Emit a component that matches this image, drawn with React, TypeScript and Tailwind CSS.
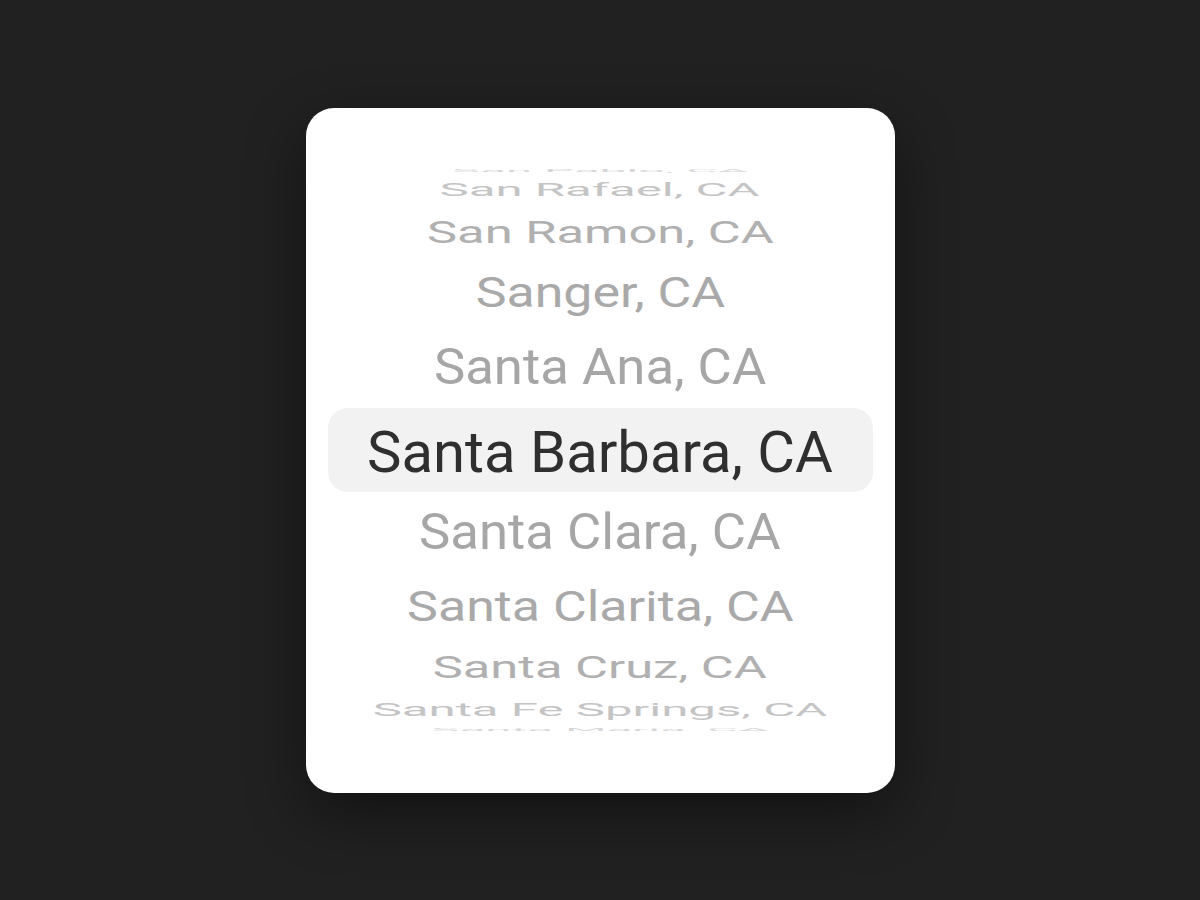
import React from "react";

const R = 280;
const A = (17 * Math.PI) / 180;
const P = 2254;

const cities = [
  "San Pablo, CA",
  "San Rafael, CA",
  "San Ramon, CA",
  "Sanger, CA",
  "Santa Ana, CA",
  "Santa Barbara, CA",
  "Santa Clara, CA",
  "Santa Clarita, CA",
  "Santa Cruz, CA",
  "Santa Fe Springs, CA",
  "Santa Maria, CA",
];

const tone = [
  "text-[#2f2f2f]",
  "text-[#a6a6a6]",
  "text-[#a9a9a9]",
  "text-[#b0b0b0]",
  "text-[#c4c4c4]",
  "text-[#d6d6d6]",
];

const clamp = (t: number) => Math.max(-Math.PI / 2, Math.min(Math.PI / 2, t));
const edge = (t: number) => R * Math.sin(clamp(t));

function Row({ label, k }: { label: string; k: number }) {
  if (k === 0) {
    return (
      <div className="mx-[22px] flex h-[84px] shrink-0 items-center justify-center rounded-[20px] bg-[#f2f2f2]">
        <span className={`translate-y-[2px] whitespace-nowrap text-[58px] leading-none ${tone[0]}`}>{label}</span>
      </div>
    );
  }
  const top = edge((k - 0.5) * A);
  const bottom = edge((k + 0.5) * A);
  const h = bottom - top;
  const bandCenter = (top + bottom) / 2;
  const itemCenter = R * Math.sin(k * A);
  const dy = itemCenter - bandCenter;
  const cos = Math.cos(k * A);
  const s = P / (P + R * (1 - cos));
  return (
    <div className="flex shrink-0 items-center justify-center" style={{ height: h }}>
      <span
        className={`whitespace-nowrap text-[53px] leading-none ${tone[Math.abs(k)]}`}
        style={{ transform: `translateY(${dy}px) scale(${s}, ${s * cos})` }}
      >
        {label}
      </span>
    </div>
  );
}

export default function App() {
  return (
    <div
      className="flex h-[900px] w-full items-center justify-center bg-[#212121]"
      style={{ fontFamily: "Roboto, 'Liberation Sans', sans-serif" }}
    >
      <div className="flex h-[685px] w-[589px] flex-col justify-center rounded-[28px] bg-white shadow-[0_20px_60px_rgba(0,0,0,0.45)]">
        <div className="flex flex-col overflow-hidden">
          {cities.map((c, i) => (
            <Row key={c} label={c} k={i - 5} />
          ))}
        </div>
      </div>
    </div>
  );
}
